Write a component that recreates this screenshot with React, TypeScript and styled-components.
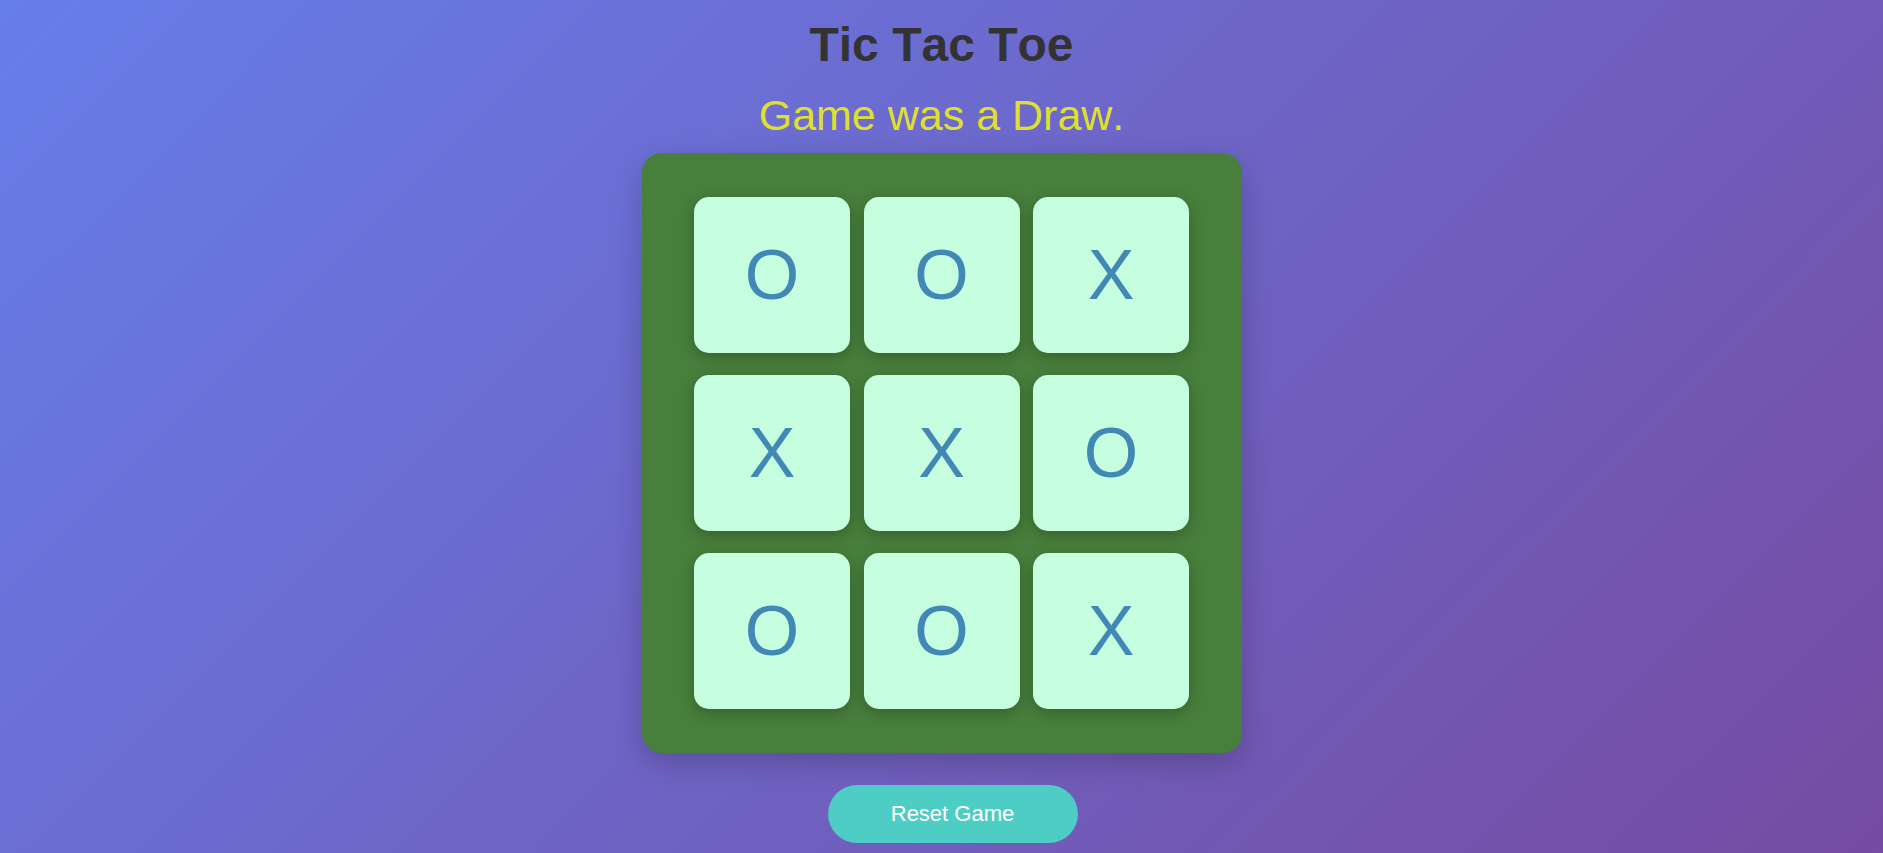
import React from "react";
import styled, { createGlobalStyle } from "styled-components";

const GlobalStyle = createGlobalStyle`
  html, body {
    margin: 0;
    padding: 0;
  }
  body {
    font-family: "Liberation Sans", Arial, sans-serif;
    font-kerning: none;
    background: linear-gradient(135deg, #667eea 0%, #764ba2 100%);
    min-height: 100vh;
  }
`;

const Page = styled.div`
  min-height: 100vh;
  display: flex;
  flex-direction: column;
  align-items: center;
  padding-top: 17px;
  box-sizing: border-box;
`;

const Title = styled.h1`
  margin: 0;
  font-size: 48px;
  font-weight: 700;
  color: #333333;
  line-height: normal;
  font-kerning: none;
`;

const Status = styled.div`
  margin: 19px 0 13px;
  font-size: 43px;
  color: #dfdf2f;
  line-height: normal;
  font-kerning: none;
`;

const Board = styled.div`
  width: 600px;
  height: 600px;
  box-sizing: border-box;
  background: #487f3c;
  border-radius: 20px;
  box-shadow: 0 10px 30px rgba(0, 0, 0, 0.2);
  display: grid;
  grid-template-columns: repeat(3, 156px);
  grid-auto-rows: 156px;
  column-gap: 13.5px;
  row-gap: 22px;
  justify-content: center;
  align-content: center;
`;

const Cell = styled.button`
  border: none;
  padding: 0;
  margin: 0;
  background: #c6ffe0;
  border-radius: 15px;
  box-shadow: 0 4px 15px rgba(0, 0, 0, 0.25);
  display: flex;
  align-items: center;
  justify-content: center;
  font-family: "Liberation Sans", Arial, sans-serif;
  font-size: 70px;
  line-height: normal;
  color: #4189b4;
  cursor: pointer;
`;

const ResetButton = styled.button`
  margin-top: 32px;
  margin-left: 22px;
  width: 250px;
  height: 58px;
  border: none;
  border-radius: 29px;
  background: #4ecdc4;
  color: #ffffff;
  font-family: "Liberation Sans", Arial, sans-serif;
  font-kerning: none;
  font-size: 22px;
  cursor: pointer;
`;

const squares = ["O", "O", "X", "X", "X", "O", "O", "O", "X"];

export default function App() {
  return (
    <>
      <GlobalStyle />
      <Page>
        <Title>Tic Tac Toe</Title>
        <Status>Game was a Draw.</Status>
        <Board>
          {squares.map((v, i) => (
            <Cell key={i}>{v}</Cell>
          ))}
        </Board>
        <ResetButton>Reset Game</ResetButton>
      </Page>
    </>
  );
}
